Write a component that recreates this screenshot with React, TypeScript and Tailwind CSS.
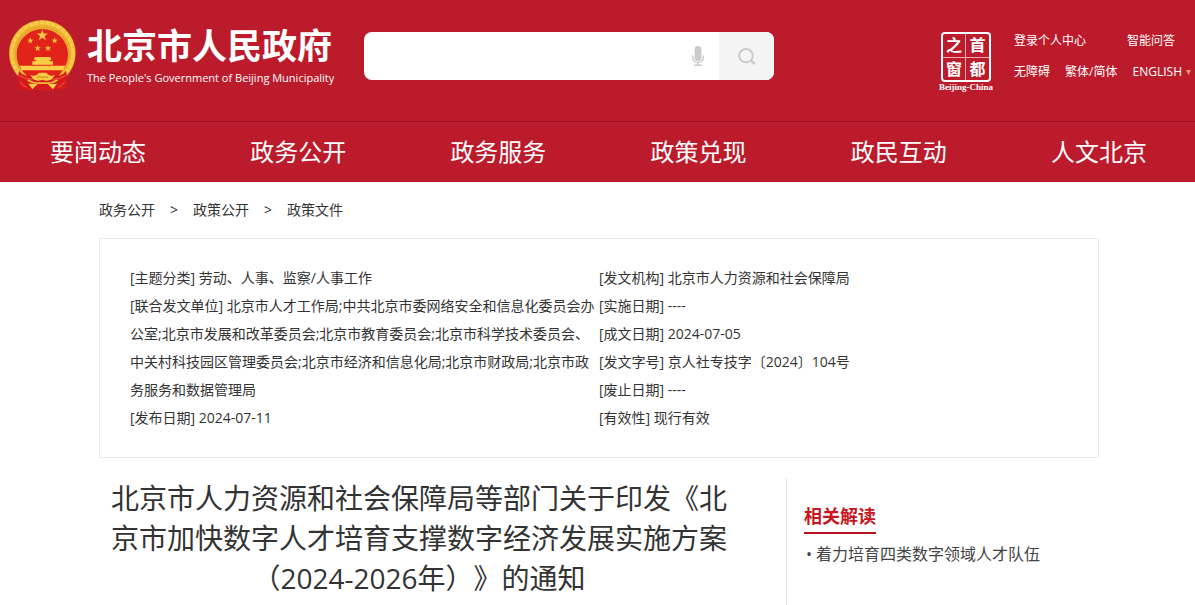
import { useState } from 'react';

interface MetaItem {
	label: string;
	value: string;
}

const NAV_ITEMS = ['要闻动态', '政务公开', '政务服务', '政策兑现', '政民互动', '人文北京'];

const BREADCRUMBS = ['政务公开', '政策公开', '政策文件'];

const META_LEFT: MetaItem[] = [
	{ label: '主题分类', value: '劳动、人事、监察/人事工作' },
	{
		label: '联合发文单位',
		value:
			'北京市人才工作局;中共北京市委网络安全和信息化委员会办公室;北京市发展和改革委员会;北京市教育委员会;北京市科学技术委员会、中关村科技园区管理委员会;北京市经济和信息化局;北京市财政局;北京市政务服务和数据管理局',
	},
	{ label: '发布日期', value: '2024-07-11' },
];

const META_RIGHT: MetaItem[] = [
	{ label: '发文机构', value: '北京市人力资源和社会保障局' },
	{ label: '实施日期', value: '----' },
	{ label: '成文日期', value: '2024-07-05' },
	{ label: '发文字号', value: '京人社专技字〔2024〕104号' },
	{ label: '废止日期', value: '----' },
	{ label: '有效性', value: '现行有效' },
];

const starPoints = (cx: number, cy: number, r: number) =>
	Array.from({ length: 10 }, (_, i) => {
		const radius = i % 2 === 0 ? r : r * 0.4;
		const angle = (Math.PI / 5) * i - Math.PI / 2;
		return `${cx + radius * Math.cos(angle)},${cy + radius * Math.sin(angle)}`;
	}).join(' ');

const Emblem = () => (
	<svg viewBox="0 0 201 213" className="h-[71px] w-[67px] shrink-0" aria-hidden="true">
		<circle cx="100" cy="100" r="100" fill="#eeb233" />
		<circle cx="100" cy="100" r="92" fill="none" stroke="#f8cd48" strokeWidth="10" strokeDasharray="14 3" />
		<circle cx="100" cy="102" r="80" fill="none" stroke="#e0a028" strokeWidth="3" />
		<circle cx="100" cy="104" r="77" fill="#e2231a" />
		<polygon points={starPoints(100, 46, 18)} fill="#f8c63d" />
		<polygon points={starPoints(64, 62, 10)} fill="#f8c63d" />
		<polygon points={starPoints(137, 62, 10)} fill="#f8c63d" />
		<polygon points={starPoints(86, 85, 10)} fill="#f8c63d" />
		<polygon points={starPoints(117, 85, 10)} fill="#f8c63d" />
		<path d="M78 111h46l4 8H74zM80 119h42v5H80zM70 124h62v10H70z" fill="#f9cc45" />
		<path d="M32 137h137l-6 14H38z" fill="#f9cc45" />
		<path d="M42 154h117l-13 16H56z" fill="#e2231a" />
		{/* red drapery and gold wheel along the foot */}
		<path
			d="M30 152 Q40 168 62 168 L84 180 H117 L139 168 Q161 168 171 152 L177 190 L172 204 L150 211 H52 L30 206 L25 190Z"
			fill="#d41a1c"
		/>
		<path d="M32 166 Q52 180 78 176 M169 166 Q149 180 123 176" fill="none" stroke="#f04b38" strokeWidth="4" />
		<path d="M34 184 Q40 198 54 202 M167 184 Q161 198 147 202" fill="none" stroke="#ef4233" strokeWidth="4" />
		<path d="M64 165 Q76 170 84 164 L90 158 H112 L118 164 Q126 170 138 165 L128 178 Q115 186 100 179 Q86 186 73 178Z" fill="#f9cc45" />
		<path d="M84 173 Q92 167 100 173 Q108 167 117 173" fill="none" stroke="#d8901c" strokeWidth="4" />
		<path d="M56 180 Q76 192 100 189 Q126 192 146 180" fill="none" stroke="#f6bd34" strokeWidth="5" />
		<path d="M58 191 L86 192 L70 208Z M144 191 L116 192 L132 208Z" fill="#f9cc45" />
	</svg>
);

const SiteLogo = () => (
	<a href="#" className="flex items-start gap-[11px] text-white">
		<Emblem />
		<span className="flex flex-col whitespace-nowrap pt-1">
			<span className="text-[35px] font-bold leading-[44px]">北京市人民政府</span>
			<span className="text-[11px] leading-5">The People's Government of Beijing Municipality</span>
		</span>
	</a>
);

const SearchBar = () => {
	const [keyword, setKeyword] = useState('');

	return (
		<form
			onSubmit={(event) => event.preventDefault()}
			className="flex h-12 w-full max-w-[410px] overflow-hidden rounded-lg bg-white"
		>
			<input
				type="text"
				aria-label="搜索"
				value={keyword}
				onChange={(e) => setKeyword(e.target.value)}
				className="min-w-0 flex-1 bg-transparent px-4 text-base text-[#333] outline-none"
			/>
			<button type="button" aria-label="语音搜索" className="flex w-[42px] items-center justify-center">
				<svg viewBox="0 0 12 20" className="h-5 w-3" fill="none" stroke="#cbcbcb">
					<rect x="2.6" y="0" width="6.8" height="15" rx="3.2" fill="#cbcbcb" stroke="none" />
					<path d="M0.7 9.5v1.7a5.3 5.2 0 0 0 10.6 0V9.5M6 16.5v2.6M2 19.2h8" strokeWidth="1.4" />
				</svg>
			</button>
			<button type="submit" aria-label="提交搜索" className="flex w-[55px] items-center justify-center bg-[#f4f4f4]">
				<svg viewBox="0 0 18 17" className="h-[17px] w-[18px]" fill="none" stroke="#cbcbcb" strokeWidth="2">
					<ellipse cx="8" cy="7.7" rx="6.8" ry="6.6" />
					<path d="M12.8 12.4l4 3.6" strokeWidth="2.4" />
				</svg>
			</button>
		</form>
	);
};

const CapitalSeal = () => (
	<a href="#" className="flex w-14 flex-col items-center text-white">
		<span className="grid size-[50px] grid-cols-2 rounded-sm border-2 border-white text-center text-base font-bold leading-[22px]">
			<span className="border-b border-r border-[#e9a9b0]">之</span>
			<span className="border-b border-[#e9a9b0]">首</span>
			<span className="border-r border-[#e9a9b0]">窗</span>
			<span>都</span>
		</span>
		<span className="whitespace-nowrap font-['Liberation_Serif',serif] text-[9px] font-bold leading-[10px]">
			Beijing-China
		</span>
	</a>
);

const UserLinks = () => (
	<div className="flex w-[181px] shrink-0 flex-col gap-[11px] whitespace-nowrap text-xs leading-5 text-white">
		<div className="flex justify-between pr-5">
			<a href="#">登录个人中心</a>
			<a href="#">智能问答</a>
		</div>
		<div className="flex justify-between pr-1">
			<a href="#">无障碍</a>
			<a href="#">繁体/简体</a>
			<a href="#" className="flex items-center gap-1">
				ENGLISH
				<svg viewBox="0 0 5 5" className="size-[5px]" aria-hidden="true">
					<path d="M0 0h5L2.5 5z" fill="#e8a06a" />
				</svg>
			</a>
		</div>
	</div>
);

const MetaList = ({ items }: { items: MetaItem[] }) => (
	<ul>
		{items.map((item) => (
			<li key={item.label}>{`[${item.label}] ${item.value}`}</li>
		))}
	</ul>
);

const App = () => {
	return (
		<div className="bg-white font-['Open_Sans','Noto_Sans_CJK_SC',sans-serif] text-[#333] [text-spacing-trim:space-all]">
			<header className="bg-[#bc1b2c]">
				<div className="flex min-h-[121px] items-start pl-[9px]">
					<div className="shrink-0 pt-5">
						<SiteLogo />
					</div>
					<div className="ml-[30px] flex-1 pt-8">
						<SearchBar />
					</div>
					<div className="pt-8">
						<CapitalSeal />
					</div>
					<div className="pl-5 pt-[31px]">
						<UserLinks />
					</div>
				</div>
				<nav className="flex justify-between border-t border-[#a00f22] pl-[50px] pr-12 text-2xl leading-[60px] text-white">
					{NAV_ITEMS.map((item) => (
						<a key={item} href="#">
							{item}
						</a>
					))}
				</nav>
			</header>

			<main className="pl-[99px] pr-24">
				<nav aria-label="面包屑" className="flex gap-[15px] text-sm leading-[56px]">
					{BREADCRUMBS.map((item, index) => (
						<span key={item} className="flex gap-[15px]">
							{index > 0 && <span>&gt;</span>}
							<a href="#">{item}</a>
						</span>
					))}
				</nav>

				<section className="grid grid-cols-2 border border-[#ebebe8] px-[30px] py-[25px] text-sm leading-7">
					<MetaList items={META_LEFT} />
					<MetaList items={META_RIGHT} />
				</section>

				<div className="flex pt-5">
					<article className="flex-1 pl-[11px] pr-[58px]">
						<h1 className="text-center text-[28px] leading-10">
							北京市人力资源和社会保障局等部门关于印发《北京市加快数字人才培育支撑数字经济发展实施方案（2024-2026年）》的通知
						</h1>
					</article>
					<aside className="w-[313px] border-l border-[#e6e6e6] pb-9 pl-[17px] pt-[22px]">
						<h2 className="w-fit border-b-2 border-[#b8141f] text-lg font-bold leading-8 text-[#c7161d]">相关解读</h2>
						<ul className="mt-1 text-base leading-8 text-[#444]">
							<li className="flex gap-1 pl-0.5">
								<span>•</span>
								<a href="#">着力培育四类数字领域人才队伍</a>
							</li>
						</ul>
					</aside>
				</div>
			</main>
		</div>
	);
};

export default App;
